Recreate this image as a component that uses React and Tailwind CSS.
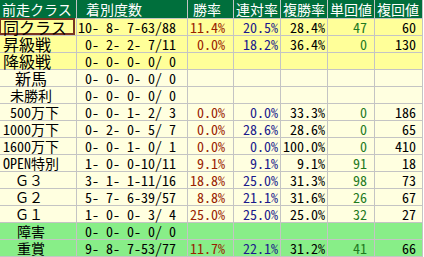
import React from 'react'

const headers = [
  { label: '前走クラス', pad: 'pl-[2px]' },
  { label: '着別度数', pad: 'pl-[9px]' },
  { label: '勝率', pad: 'pl-[5px]' },
  { label: '連対率', pad: 'pl-[2px]' },
  { label: '複勝率', pad: 'pl-[2px]' },
  { label: '単回値', pad: 'pl-[2px]' },
  { label: '複回値', pad: 'pl-[2px]' },
]

// bg: y = yellow, c = cream, g = green
const rows = [
  { name: '同クラス', indent: 'pl-[3px]', bg: 'y', big: true, rec: '10- 8- 7-63/88', win: '11.4%', ren: '20.5%', fuku: '28.4%', tan: '47', fk: '60', boxed: true },
  { name: '昇級戦', indent: 'pl-[3px]', bg: 'y', big: true, rec: '0- 2- 2- 7/11', win: '0.0%', ren: '18.2%', fuku: '36.4%', tan: '0', fk: '130' },
  { name: '降級戦', indent: 'pl-[3px]', bg: 'y', big: true, rec: '0- 0- 0- 0/ 0' },
  { name: '新馬', indent: 'pl-[15px]', bg: 'c', big: true, rec: '0- 0- 0- 0/ 0' },
  { name: '未勝利', indent: 'pl-[10px]', bg: 'c', rec: '0- 0- 0- 0/ 0' },
  { name: '500万下', indent: 'pl-[10px]', bg: 'c', rec: '0- 0- 1- 2/ 3', win: '0.0%', ren: '0.0%', fuku: '33.3%', tan: '0', fk: '186' },
  { name: '1000万下', indent: 'pl-[3px]', bg: 'c', rec: '0- 2- 0- 5/ 7', win: '0.0%', ren: '28.6%', fuku: '28.6%', tan: '0', fk: '65' },
  { name: '1600万下', indent: 'pl-[3px]', bg: 'c', rec: '0- 0- 1- 0/ 1', win: '0.0%', ren: '0.0%', fuku: '100.0%', tan: '0', fk: '410' },
  { name: 'OPEN特別', indent: 'pl-[3px]', bg: 'c', rec: '1- 0- 0-10/11', win: '9.1%', ren: '9.1%', fuku: '9.1%', tan: '91', fk: '18' },
  { name: 'Ｇ３', indent: 'pl-[15px]', bg: 'c', full: true, rec: '3- 1- 1-11/16', win: '18.8%', ren: '25.0%', fuku: '31.3%', tan: '98', fk: '73' },
  { name: 'Ｇ２', indent: 'pl-[15px]', bg: 'c', full: true, rec: '5- 7- 6-39/57', win: '8.8%', ren: '21.1%', fuku: '31.6%', tan: '26', fk: '67' },
  { name: 'Ｇ１', indent: 'pl-[15px]', bg: 'c', full: true, rec: '1- 0- 0- 3/ 4', win: '25.0%', ren: '25.0%', fuku: '25.0%', tan: '32', fk: '27' },
  { name: '障害', indent: 'pl-[17px]', bg: 'g', rec: '0- 0- 0- 0/ 0' },
  { name: '重賞', indent: 'pl-[17px]', bg: 'g', rec: '9- 8- 7-53/77', win: '11.7%', ren: '22.1%', fuku: '31.2%', tan: '41', fk: '66' },
]

const bgClass = {
  y: 'bg-[#ffff99]',
  c: 'bg-[#ffffe0]',
  g: 'bg-[#88ee88]',
}

export default function App() {
  return (
    <div className="w-[424px] h-[257px] bg-white overflow-hidden font-['Noto_Sans_CJK_JP',sans-serif] text-[14px] leading-none">
      <div className="grid grid-cols-[76px_110px_45px_46px_46px_46px_47px] gap-px bg-[#c4c4c4] w-[423px] pr-px pb-px">
        {/* header */}
        {headers.map((h) => (
          <div key={h.label} className={`h-[18px] flex items-center bg-[#006f3c] text-white ${h.pad}`}>
            {h.label}
          </div>
        ))}

        {/* body */}
        {rows.map((r) => {
          const bg = bgClass[r.bg]
          const half = r.full ? '' : "[font-feature-settings:'hwid']"
          const size = r.big ? 'text-[16px]' : ''
          return (
            <React.Fragment key={r.name}>
              <div className={`h-[16px] ${bg} text-black ${half} ${size}`}>
                {r.boxed ? (
                  <div className="h-[17px] -mt-px -ml-px w-[76px] flex items-center border-2 border-[#7a3520] pl-[2px]">
                    {r.name}
                  </div>
                ) : (
                  <div className={`h-full flex items-center ${r.indent}`}>{r.name}</div>
                )}
              </div>
              <div className={`h-[16px] ${bg} flex items-center justify-end pr-[11px] whitespace-pre text-black [font-feature-settings:'hwid']`}>
                {r.rec}
              </div>
              <div className={`h-[16px] ${bg} flex items-center justify-end pr-[8px] text-[#992200] [font-feature-settings:'hwid']`}>{r.win}</div>
              <div className={`h-[16px] ${bg} flex items-center justify-end pr-[2px] text-[#1a1a8c] [font-feature-settings:'hwid']`}>{r.ren}</div>
              <div className={`h-[16px] ${bg} flex items-center justify-end pr-[2px] text-black [font-feature-settings:'hwid']`}>{r.fuku}</div>
              <div className={`h-[16px] ${bg} flex items-center justify-end pr-[7px] text-[#1f7a1f] [font-feature-settings:'hwid']`}>{r.tan}</div>
              <div className={`h-[16px] ${bg} flex items-center justify-end pr-[6px] text-black [font-feature-settings:'hwid']`}>{r.fk}</div>
            </React.Fragment>
          )
        })}
      </div>
    </div>
  )
}
